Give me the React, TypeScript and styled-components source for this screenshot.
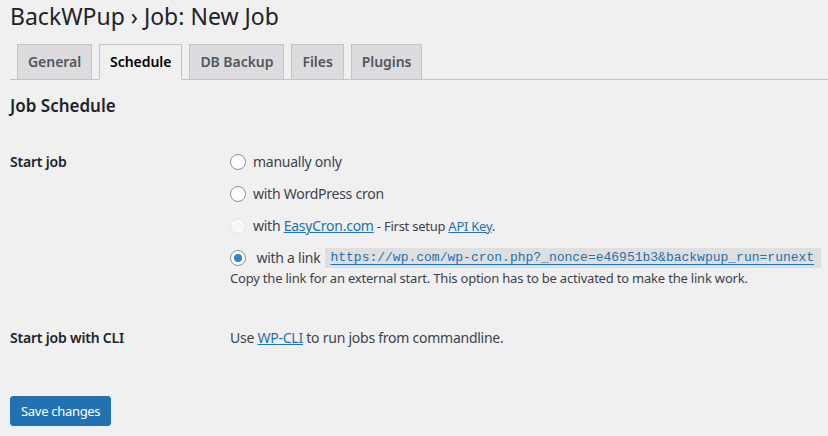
import React from "react";
import styled, { createGlobalStyle, css } from "styled-components";

const Global = createGlobalStyle`
  html, body { margin: 0; padding: 0; background: #f0f0f1; }
  body {
    font-family: "Noto Sans", "Open Sans", sans-serif;
    color: #3c434a;
    font-size: 13px;
    line-height: 1.4;
  }
  * { box-sizing: border-box; }
`;

const Wrap = styled.div`
  padding: 0 0 0 10px;
  width: 828px;
  height: 436px;
  overflow: hidden;
`;

const Title = styled.h1`
  margin: 0;
  padding: 1px 0 0;
  font-size: 23px;
  font-weight: 400;
  line-height: 30px;
  color: #1d2327;
`;

const TabBar = styled.nav`
  display: flex;
  margin-top: 13px;
  border-bottom: 1px solid #c3c4c7;
  height: 36px;
`;

const Tab = styled.a<{ $active?: boolean }>`
  display: block;
  margin-left: 7px;
  padding: 5px 10px;
  height: 36px;
  font-size: 14px;
  font-weight: 600;
  line-height: 24px;
  letter-spacing: -0.05px;
  border: 1px solid #c3c4c7;
  background: #dcdcde;
  color: #50575e;
  text-decoration: none;
  ${(p) =>
    p.$active &&
    css`
      background: #f0f0f1;
      color: #000;
      border-bottom-color: #f0f0f1;
    `}
`;

const SectionTitle = styled.h2`
  margin: 14px 0 0;
  font-size: 17px;
  font-weight: 600;
  line-height: 24px;
  color: #1d2327;
`;

const FormTable = styled.div`
  display: flex;
  flex-direction: column;
`;

const Row = styled.div<{ $top: number }>`
  display: grid;
  grid-template-columns: 220px 1fr;
  margin-top: ${(p) => p.$top}px;
`;

const Label = styled.div`
  font-size: 14px;
  font-weight: 600;
  color: #1d2327;
  line-height: 20px;
  letter-spacing: -0.2px;
`;

const Field = styled.div`
  display: flex;
  flex-direction: column;
  font-size: 14px;
  line-height: 20px;
  letter-spacing: -0.25px;
`;

const Option = styled.label`
  display: flex;
  align-items: center;
  height: 20px;
  margin-bottom: 12px;
  &:last-of-type { margin-bottom: 1px; }
`;

const Radio = styled.span<{ $checked?: boolean; $disabled?: boolean }>`
  flex: none;
  width: 16px;
  height: 16px;
  border-radius: 50%;
  border: 1px solid ${(p) => (p.$disabled ? "#e3e4e6" : "#8c8f94")};
  background: ${(p) => (p.$disabled ? "#f6f7f7" : "#fff")};
  margin-right: 7px;
  display: flex;
  align-items: center;
  justify-content: center;
  ${(p) =>
    p.$checked &&
    css`
      &::after {
        content: "";
        width: 8px;
        height: 8px;
        border-radius: 50%;
        background: #3582c4;
      }
    `}
`;

const Link = styled.a<{ $offset?: boolean }>`
  color: #2271b1;
  text-decoration: underline;
  text-underline-offset: ${(p) => (p.$offset ? "3px" : "auto")};
`;

const Small = styled.span`
  font-size: 13px;
`;

const Code = styled.code`
  font-family: "Liberation Mono", "DejaVu Sans Mono", monospace;
  font-size: 13px;
  letter-spacing: 0;
  background: rgba(0, 0, 0, 0.07);
  padding: 0 7px 0 5px;
  margin-left: 5px;
  line-height: 20px;
`;

const Description = styled.p`
  margin: 0;
  font-size: 13px;
  line-height: 18px;
  letter-spacing: -0.2px;
  color: #3c434a;
`;

const Button = styled.button`
  margin-top: 48px;
  height: 30px;
  padding: 0 10px;
  font-family: inherit;
  font-size: 13px;
  line-height: 28px;
  letter-spacing: -0.3px;
  color: #fff;
  background: #2271b1;
  border: 1px solid #2271b1;
  border-radius: 3px;
  cursor: pointer;
`;

export default function App() {
  return (
    <>
      <Global />
      <Wrap>
        <Title>BackWPup › Job: New Job</Title>
        <TabBar>
          <Tab>General</Tab>
          <Tab $active>Schedule</Tab>
          <Tab>DB Backup</Tab>
          <Tab>Files</Tab>
          <Tab>Plugins</Tab>
        </TabBar>
        <SectionTitle>Job Schedule</SectionTitle>
        <FormTable>
          <Row $top={34}>
            <Label>Start job</Label>
            <Field>
              <Option>
                <Radio />
                manually only
              </Option>
              <Option>
                <Radio />
                with WordPress cron
              </Option>
              <Option>
                <Radio $disabled />
                <span>
                  with <Link>EasyCron.com</Link>
                  <Small> - First setup </Small>
                  <Small>
                    <Link>API Key</Link>.
                  </Small>
                </span>
              </Option>
              <Option>
                <Radio $checked />
                <span>&nbsp;with a link</span>
                <Code>
                  <Link $offset>https://wp.com/wp-cron.php?_nonce=e46951b3&amp;backwpup_run=runext</Link>
                </Code>
              </Option>
              <Description>
                Copy the link for an external start. This option has to be activated to make the link work.
              </Description>
            </Field>
          </Row>
          <Row $top={41}>
            <Label>Start job with CLI</Label>
            <Field>
              <span>
                Use <Link>WP-CLI</Link> to run jobs from commandline.
              </span>
            </Field>
          </Row>
        </FormTable>
        <Button>Save changes</Button>
      </Wrap>
    </>
  );
}
